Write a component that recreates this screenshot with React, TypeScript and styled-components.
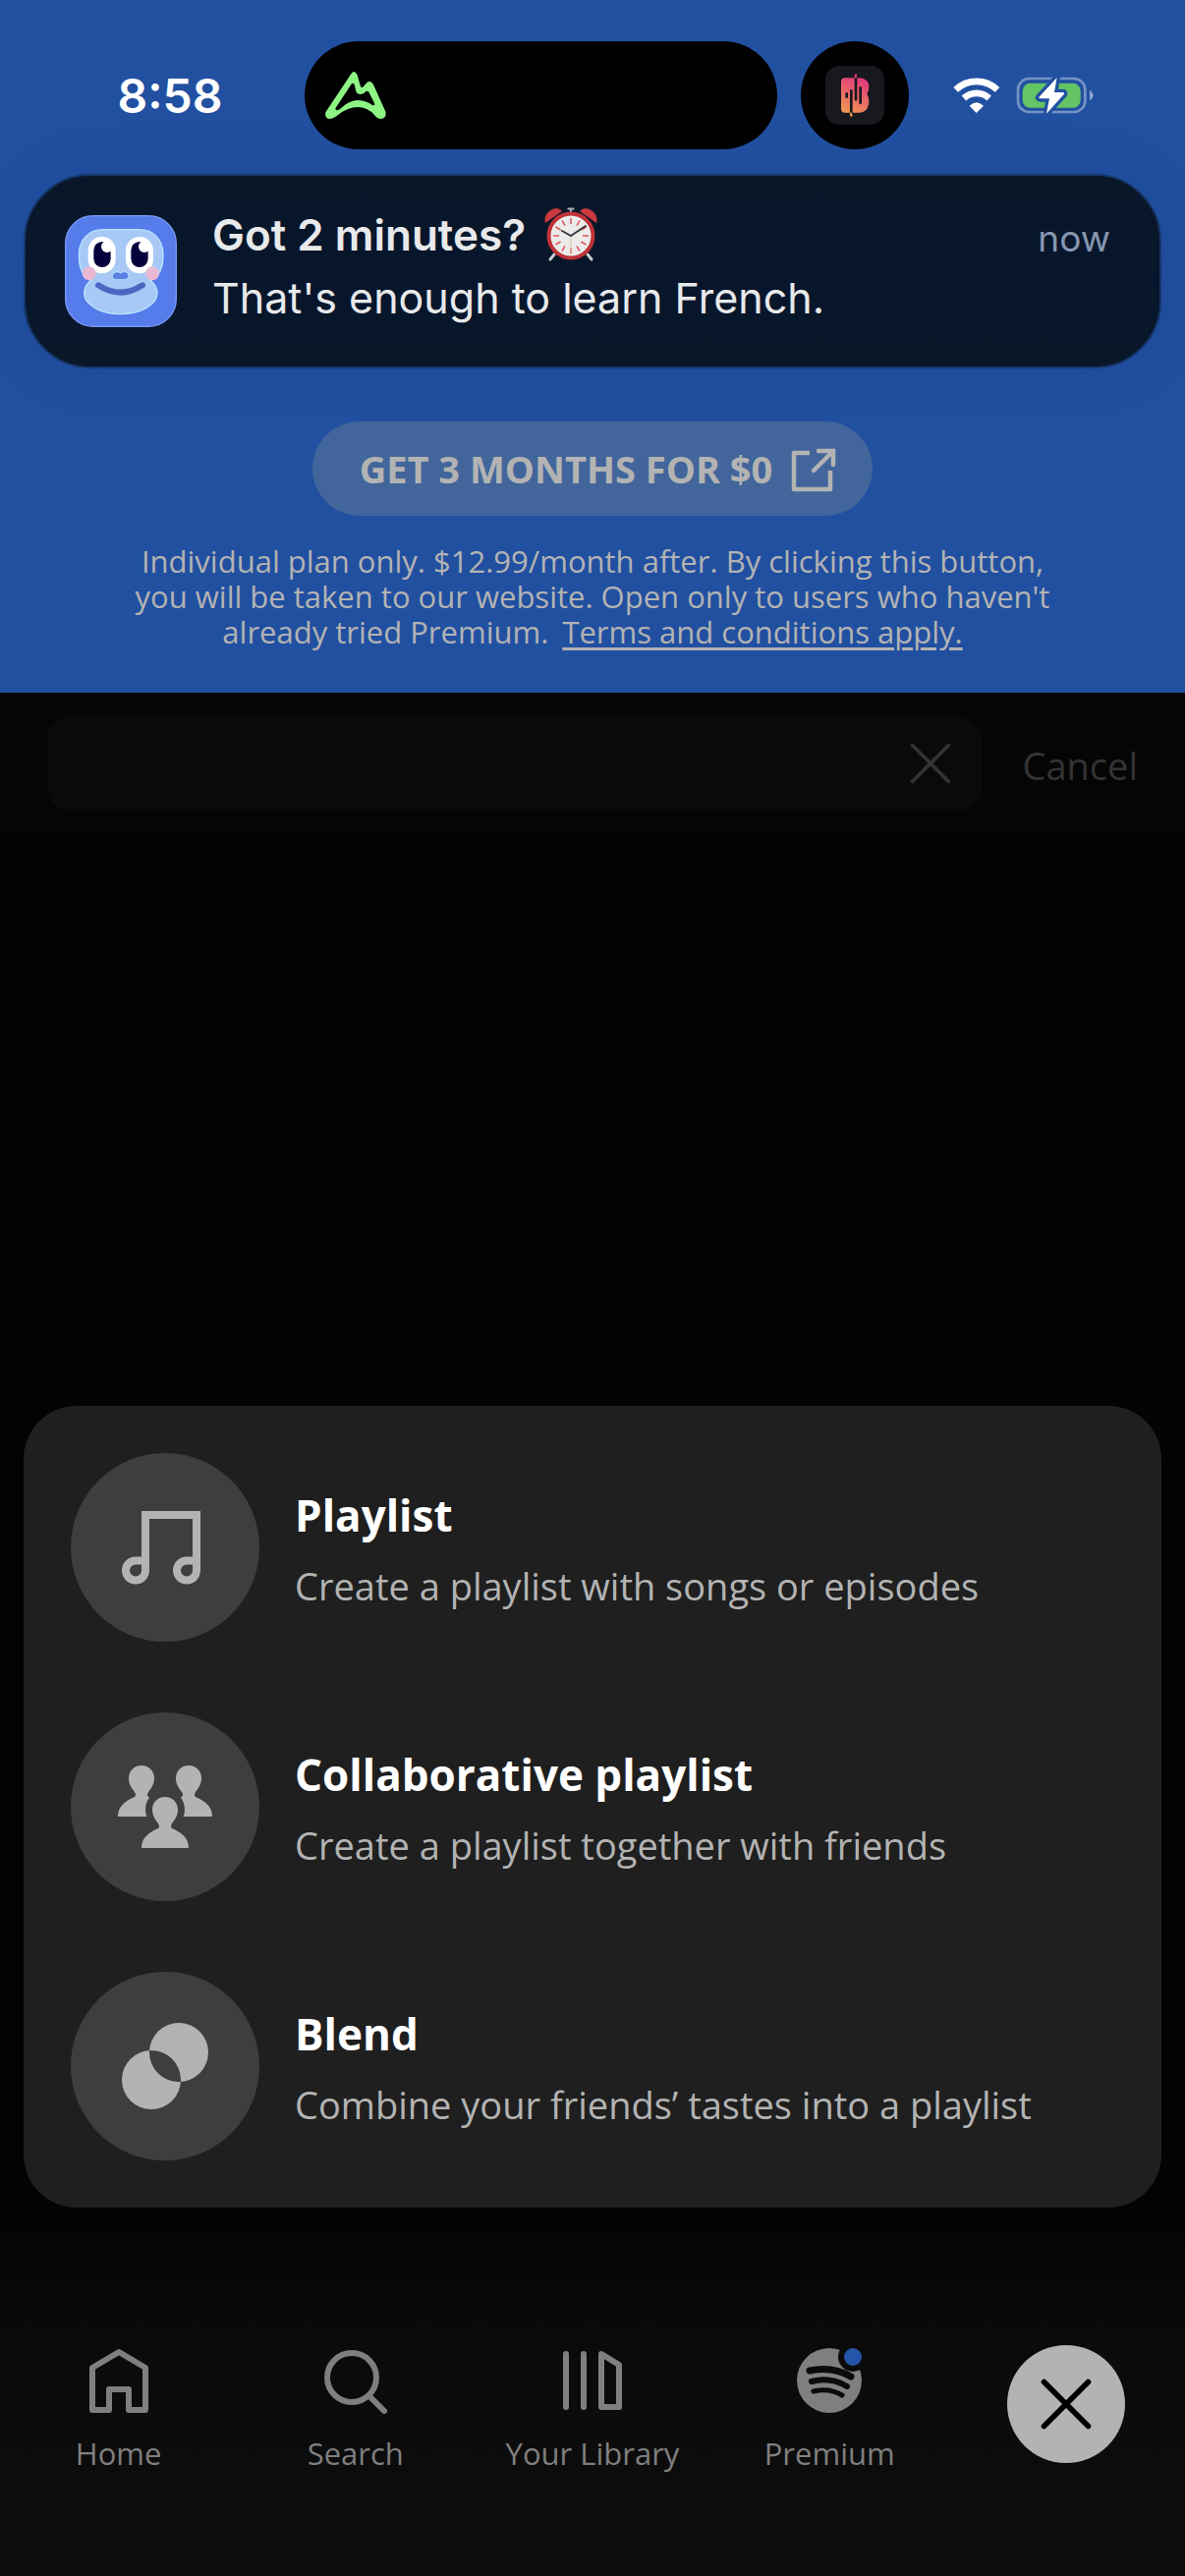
import type { ReactNode } from "react"
import styled, { createGlobalStyle } from "styled-components"

const systemFont = `Inter, "Liberation Sans", sans-serif`
const brandFont = `"Open Sans", "Noto Sans", sans-serif`

const GlobalStyle = createGlobalStyle`
  * {
    box-sizing: border-box;
  }

  body {
    margin: 0;
    background: #030303;
    font-family: ${brandFont};
  }

  button {
    font: inherit;
    color: inherit;
    background: none;
    border: none;
    padding: 0;
    cursor: pointer;
  }

  svg {
    display: block;
    flex-shrink: 0;
  }
`

const Screen = styled.div`
  min-height: 100vh;
  display: flex;
  flex-direction: column;
  background: #030303;
`

const Banner = styled.header`
  display: flex;
  flex-direction: column;
  align-items: center;
  padding: 42px 24px 44px;
  background: #2250a1;
`

const StatusBar = styled.div`
  align-self: stretch;
  display: grid;
  grid-template-columns: 286fr 481px 24px 110px 257fr;
  align-items: center;
  height: 110px;
`

const Time = styled.time`
  padding-left: 12px;
  text-align: center;
  font-family: ${systemFont};
  font-size: 48px;
  font-weight: 600;
  color: #fff;
`

const Island = styled.div`
  display: flex;
  align-items: center;
  height: 110px;
  padding-left: 20px;
  border-radius: 55px;
  background: #000;
`

const IslandDot = styled.div`
  grid-column: 4;
  display: grid;
  place-items: center;
  height: 110px;
  border-radius: 50%;
  background: #000;
`

const StatusIcons = styled.div`
  display: flex;
  align-items: center;
  justify-content: center;
  gap: 16px;
  padding-right: 24px;
`

const Notification = styled.section`
  align-self: stretch;
  display: flex;
  align-items: center;
  gap: 36px;
  min-height: 198px;
  margin-top: 25px;
  padding: 0 50px 0 40px;
  border: 2px solid #153567;
  border-radius: 68px;
  background: linear-gradient(#0a1729, #07162c 55%, #091728);
  box-shadow: 0 0 60px rgba(0, 20, 70, 0.12);
  font-family: ${systemFont};
  color: #e8e9eb;
`

const NotificationBody = styled.div`
  flex: 1;
  padding-bottom: 10px;
`

const NotificationTitle = styled.h2`
  display: flex;
  align-items: center;
  gap: 18px;
  margin: 0;
  font-size: 44px;
  font-weight: 600;
  line-height: 64px;
`

const NotificationText = styled.p`
  margin: 0;
  font-size: 43px;
  line-height: 64px;
`

const NotificationTime = styled.span`
  align-self: flex-start;
  margin-top: 32px;
  font-size: 37px;
  line-height: 64px;
  color: #8796b0;
`

const OfferButton = styled.button`
  display: flex;
  align-items: center;
  gap: 18px;
  height: 96px;
  margin-top: 54px;
  padding: 0 36px 0 48px;
  border-radius: 48px;
  background: #42669b;
  color: #b3b3b3;
  font-size: 38px;
  font-weight: 700;
`

const Terms = styled.p`
  max-width: 966px;
  margin: 28px 0 0;
  text-align: center;
  font-size: 31px;
  line-height: 36px;
  color: #b3b3b3;

  a {
    display: inline-block;
    margin-left: 6px;
    color: inherit;
    text-underline-offset: 4px;
    text-decoration-thickness: 3px;
  }
`

const SearchBar = styled.form`
  display: flex;
  align-items: center;
  gap: 42px;
  padding: 24px 48px;
  background: #050505;
  color: #333;
`

const SearchField = styled.div`
  flex: 1;
  display: flex;
  align-items: center;
  height: 96px;
  padding: 0 30px;
  border-radius: 24px;
  background: #0a0a0a;
`

const SearchInput = styled.input`
  flex: 1;
  min-width: 0;
  border: none;
  outline: none;
  background: none;
  color: #b3b3b3;
  font: inherit;
  font-size: 38px;
`

const CancelButton = styled.button`
  padding-top: 4px;
  font-size: 38px;
`

const Sheet = styled.section`
  display: flex;
  flex-direction: column;
  gap: 72px;
  margin: auto 24px 0;
  padding: 48px;
  border-radius: 54px;
  background: #1f1f1f;
`

const SheetRow = styled.button`
  display: flex;
  align-items: center;
  gap: 36px;
  text-align: left;
`

const RowIcon = styled.span`
  display: grid;
  place-items: center;
  flex-shrink: 0;
  width: 192px;
  height: 192px;
  border-radius: 50%;
  background: #3e3e3e;
  color: #b3b3b3;
`

const RowText = styled.span`
  display: flex;
  flex-direction: column;
  padding-top: 6px;
`

const RowTitle = styled.span`
  font-size: 44px;
  font-weight: 700;
  line-height: 72px;
  color: #fff;
`

const RowSubtitle = styled.span`
  font-size: 38px;
  line-height: 72px;
  color: #b3b3b3;
`

const TabBar = styled.nav`
  display: grid;
  grid-template-columns: repeat(5, 1fr);
  align-items: start;
  justify-items: center;
  min-height: 375px;
  padding-top: 140px;
  background: linear-gradient(#030303, #0b0b0b 40%, #0d0d0d);
`

const Tab = styled.a`
  display: flex;
  flex-direction: column;
  align-items: center;
  gap: 18px;
  color: #7f7f7f;
  font-size: 31px;
  line-height: 40px;
  text-decoration: none;
  white-space: nowrap;
`

const CloseButton = styled.button`
  display: grid;
  place-items: center;
  width: 120px;
  height: 120px;
  border-radius: 50%;
  background: #b3b3b3;
  color: #000;
`

const PeakLogo = () => (
  <svg width="64" height="50" viewBox="330 72 64 50" aria-hidden="true">
    <path
      fill="#8ef585"
      fillRule="evenodd"
      d="M357.5 75Q360.5 70.5 363.5 76L367 88Q368 90 370 88L373 84.5Q377 81 380 86L392.5 114Q393.5 121 387.5 121Q384 121 381 117Q374 109 364 109Q354 109 344 117Q339 121 335 121Q330 120 331.5 114ZM358 85Q360 84 361 87L362 92Q363 96 367 96Q370 96 372.5 93Q374.5 92 375.5 94L381 105Q382 108 379 107Q372 102 363 102Q354 103 346 111Q341 114 341.5 110Z"
    />
  </svg>
)

const BeatLogo = () => (
  <svg width="60" height="60" viewBox="0 0 180 180" aria-hidden="true">
    <defs>
      <linearGradient id="beat" gradientUnits="userSpaceOnUse" x1="55" y1="150" x2="115" y2="30">
        <stop offset="0" stopColor="#efa050" />
        <stop offset="1" stopColor="#e2307f" />
      </linearGradient>
    </defs>
    <rect width="180" height="180" rx="42" fill="#18181f" />
    <path
      fill="url(#beat)"
      d="M60 37H104C121 37 133 48 133 64Q133 76 128 83Q127 86 129 90Q133 96 133 107C133 130 121 143 102 143H60Q48 143 48 131V49Q48 37 60 37Z"
    />
    <g stroke="#18181f" strokeWidth="8" strokeLinecap="round">
      <path d="M65 85V95M79 76V146M93 34V103M107 67V113" />
    </g>
    <g stroke="url(#beat)" strokeWidth="7" strokeLinecap="round">
      <path d="M78 146L79 152M92 34L93 28" />
    </g>
  </svg>
)

const WifiIcon = () => (
  <svg width="48" height="36" viewBox="449 88 144 108" aria-label="Wi-Fi">
    <g fill="none" stroke="#fff" strokeWidth="20">
      <path d="M457 125A92 92 0 0 1 584 125" />
      <path d="M482 151A56 56 0 0 1 559 151" />
    </g>
    <path fill="#fff" d="M520 196L499 174Q520 153 542 174Z" />
  </svg>
)

const BatteryIcon = () => (
  <svg width="79" height="40" viewBox="640 82 237 120" aria-label="Battery charging">
    <rect x="646" y="91" width="205" height="102" rx="34" fill="none" stroke="#fff" strokeOpacity="0.38" strokeWidth="8" />
    <path fill="#fff" fillOpacity="0.5" d="M865 126Q876 134 876 142T865 158Z" />
    <rect x="660" y="105" width="177" height="75" rx="23" fill="#64c466" />
    <path
      d="M765 88L709 149Q711 152 714 152H742L733 198L787 138Q788 133 784 133H757Z"
      fill="#fff"
      stroke="#2250a1"
      strokeWidth="20"
      strokeLinejoin="round"
      paintOrder="stroke"
    />
  </svg>
)

const BuddyIcon = () => (
  <svg width="114" height="114" viewBox="48 57 342 342" aria-hidden="true">
    <rect x="50" y="59" width="338" height="338" rx="84" fill="#567beb" stroke="#7d9bf3" strokeWidth="4" />
    <path
      fill="#a8c8f6"
      stroke="#b5e6ff"
      strokeWidth="4"
      d="M165 101H275C320 101 348 132 348 180C348 220 335 245 310 257Q330 272 330 295C330 330 280 359 218 359C156 359 107 330 107 295Q107 272 128 257C103 245 91 220 91 180C91 132 120 101 165 101Z"
    />
    <rect x="119" y="123" width="84" height="112" rx="42" fill="#fff" />
    <rect x="234" y="123" width="84" height="112" rx="42" fill="#fff" />
    <rect x="136" y="138" width="52" height="78" rx="26" fill="#06003d" />
    <rect x="250" y="138" width="52" height="78" rx="26" fill="#06003d" />
    <circle cx="177" cy="153" r="18" fill="#fff" />
    <circle cx="291" cy="153" r="18" fill="#fff" />
    <circle cx="122" cy="235" r="21" fill="#e9b9d4" />
    <circle cx="315" cy="235" r="21" fill="#e9b9d4" />
    <path
      fill="#5a80e6"
      stroke="#b5e6ff"
      strokeWidth="3"
      d="M206 230Q214 230 218 234Q222 230 230 230Q243 231 243 243Q242 254 230 254H206Q193 253 193 243Q194 231 206 230Z"
    />
    <path d="M150 271Q218 315 285 271" fill="none" stroke="#4b66c1" strokeWidth="18" strokeLinecap="round" />
  </svg>
)

const minuteMarks = Array.from({ length: 12 }, (_, i) => i * 30)

const AlarmClockIcon = () => (
  <svg width="56" height="58" viewBox="0 0 56 58" aria-label="alarm clock">
    <path d="M11 49L7 54M45 49L49 54" stroke="#c9ccd2" strokeWidth="3" strokeLinecap="round" />
    <path d="M28 2V7M24.500 2.500H31.500" stroke="#a9adb5" strokeWidth="2" />
    <path d="M2 17Q0 10 6 5Q14 -1 19 5Z" fill="#c93a3f" />
    <path d="M54 17Q56 10 50 5Q42 -1 37 5Z" fill="#c93a3f" />
    <circle cx="28" cy="30" r="22.500" fill="#ecebea" stroke="#bd3238" strokeWidth="4" />
    {minuteMarks.map((angle) => (
      <path key={angle} d="M28 12V18" stroke="#e0555a" strokeWidth="1.500" transform={`rotate(${angle} 28 30)`} />
    ))}
    <path d="M28 30V47" stroke="#d9c59a" strokeWidth="1" />
    <path d="M28 30L19 25M28 30L43 20" stroke="#33363c" strokeWidth="2" strokeLinecap="round" />
  </svg>
)

const ExternalIcon = () => (
  <svg width="48" height="48" viewBox="0 0 48 48" fill="none" stroke="currentColor" strokeWidth="4.500" strokeLinejoin="round" aria-hidden="true">
    <path d="M20 8H4V45H41V26" />
    <path d="M24 26L43 7" strokeLinecap="round" />
    <path d="M29 6H44V20" strokeLinecap="round" strokeLinejoin="miter" />
  </svg>
)

const CrossIcon = ({ size, weight }: { size: number; weight: number }) => (
  <svg width={size} height={size} viewBox="0 0 48 48" fill="none" stroke="currentColor" strokeWidth={weight} strokeLinecap="round" aria-hidden="true">
    <path d="M4 4L44 44M44 4L4 44" />
  </svg>
)

const NoteIcon = () => (
  <svg width="88" height="76" viewBox="2 0 88 76" fill="none" stroke="currentColor" strokeWidth="8" aria-hidden="true">
    <path d="M26 61.500A10 10 0 1 1 16 51.500H26M26 61.500V5H78V61.500A10 10 0 1 1 68 51.500H78" />
  </svg>
)

const personPath =
  "M48 32C56 32 61 38 61 45C61 51 58 55 55 59Q53 62 55 64C64 68 72 73 72 84H24C24 73 32 68 41 64Q43 62 41 59C38 55 35 51 35 45C35 38 40 32 48 32Z"

const PeopleIcon = () => (
  <svg width="96" height="84" viewBox="0 0 96 84" fill="currentColor" aria-hidden="true">
    <path d={personPath} transform="translate(-24 -32)" />
    <path d={personPath} transform="translate(24 -32)" />
    <path d={personPath} stroke="#3e3e3e" strokeWidth="14" paintOrder="stroke" />
  </svg>
)

const BlendIcon = () => (
  <svg width="88" height="88" viewBox="0 0 88 88" fill="currentColor" fillRule="evenodd" aria-hidden="true">
    <path d="M58 0A30 30 0 1 1 58 60A30 30 0 1 1 58 0ZM30 28A30 30 0 1 1 30 88A30 30 0 1 1 30 28Z" />
  </svg>
)

const HomeIcon = () => (
  <svg width="72" height="72" viewBox="0 0 72 72" fill="none" stroke="currentColor" strokeWidth="6" strokeLinejoin="round" aria-hidden="true">
    <path d="M9 66V23L36 7L63 23V66H46V45H26V66Z" />
  </svg>
)

const SearchIcon = () => (
  <svg width="72" height="72" viewBox="0 0 72 72" fill="none" stroke="currentColor" strokeWidth="6" strokeLinecap="round" aria-hidden="true">
    <circle cx="32" cy="33" r="25" />
    <path d="M50 52L65 67" />
  </svg>
)

const LibraryIcon = () => (
  <svg width="72" height="72" viewBox="0 0 72 72" fill="none" stroke="currentColor" strokeWidth="6" strokeLinecap="round" strokeLinejoin="round" aria-hidden="true">
    <path d="M9 9V63M27 9V63M45 9L63 20V63H45Z" />
  </svg>
)

const PremiumIcon = () => (
  <svg width="72" height="72" viewBox="0 0 72 72" aria-hidden="true">
    <circle cx="36" cy="36" r="33" fill="currentColor" />
    <g fill="none" stroke="#0b0b0b" strokeLinecap="round">
      <path d="M16 26Q39 21 58 32" strokeWidth="7" />
      <path d="M18 37Q37 32 54 42" strokeWidth="6" />
      <path d="M20 47Q36 43 49 51" strokeWidth="5" />
    </g>
    <circle cx="60" cy="12" r="15" fill="#0b0b0b" />
    <circle cx="60" cy="12" r="9" fill="#2555a9" />
  </svg>
)

const sheetRows: { title: string; subtitle: string; icon: ReactNode }[] = [
  { title: "Playlist", subtitle: "Create a playlist with songs or episodes", icon: <NoteIcon /> },
  { title: "Collaborative playlist", subtitle: "Create a playlist together with friends", icon: <PeopleIcon /> },
  { title: "Blend", subtitle: "Combine your friends’ tastes into a playlist", icon: <BlendIcon /> },
]

const tabs: { label: string; icon: ReactNode }[] = [
  { label: "Home", icon: <HomeIcon /> },
  { label: "Search", icon: <SearchIcon /> },
  { label: "Your Library", icon: <LibraryIcon /> },
  { label: "Premium", icon: <PremiumIcon /> },
]

const App = () => {
  return (
    <>
      <GlobalStyle />
      <Screen>
        <Banner>
          <StatusBar>
            <Time>8:58</Time>
            <Island>
              <PeakLogo />
            </Island>
            <IslandDot>
              <BeatLogo />
            </IslandDot>
            <StatusIcons>
              <WifiIcon />
              <BatteryIcon />
            </StatusIcons>
          </StatusBar>

          <Notification>
            <BuddyIcon />
            <NotificationBody>
              <NotificationTitle>
                Got 2 minutes? <AlarmClockIcon />
              </NotificationTitle>
              <NotificationText>That's enough to learn French.</NotificationText>
            </NotificationBody>
            <NotificationTime>now</NotificationTime>
          </Notification>

          <OfferButton type="button">
            GET 3 MONTHS FOR $0
            <ExternalIcon />
          </OfferButton>
          <Terms>
            Individual plan only. $12.99/month after. By clicking this button, you will be taken to our website. Open
            only to users who haven't already tried Premium. <a href="#terms">Terms and conditions apply.</a>
          </Terms>
        </Banner>

        <SearchBar role="search">
          <SearchField>
            <SearchInput type="text" aria-label="Search" />
            <button type="button" aria-label="Clear search">
              <CrossIcon size={44} weight={4} />
            </button>
          </SearchField>
          <CancelButton type="button">Cancel</CancelButton>
        </SearchBar>

        <Sheet aria-label="Create">
          {sheetRows.map((row) => (
            <SheetRow key={row.title} type="button">
              <RowIcon>{row.icon}</RowIcon>
              <RowText>
                <RowTitle>{row.title}</RowTitle>
                <RowSubtitle>{row.subtitle}</RowSubtitle>
              </RowText>
            </SheetRow>
          ))}
        </Sheet>

        <TabBar>
          {tabs.map((tab) => (
            <Tab key={tab.label} href={`#${tab.label.toLowerCase().replace(" ", "-")}`}>
              {tab.icon}
              {tab.label}
            </Tab>
          ))}
          <CloseButton type="button" aria-label="Close">
            <CrossIcon size={54} weight={5} />
          </CloseButton>
        </TabBar>
      </Screen>
    </>
  )
}

export default App
